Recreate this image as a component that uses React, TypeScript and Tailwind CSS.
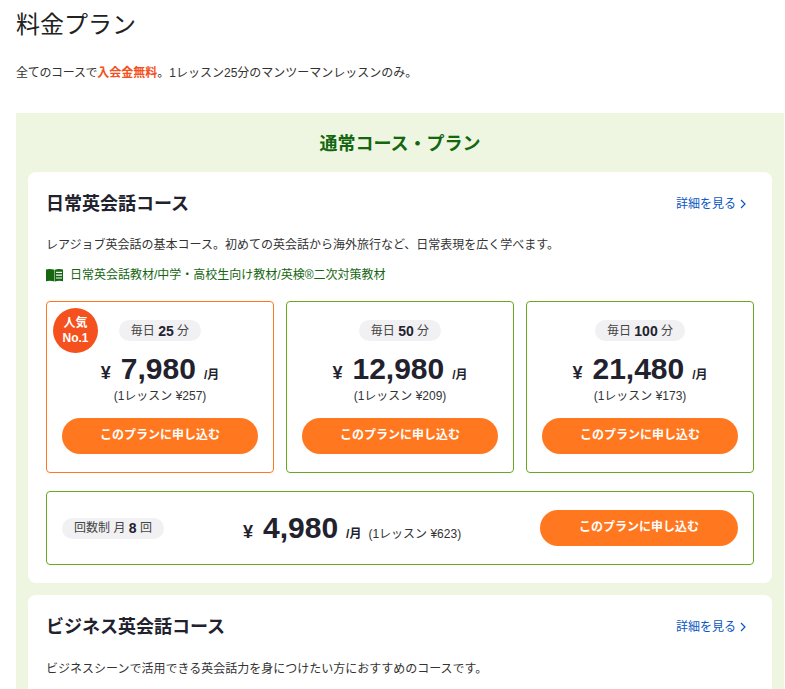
import React from 'react';

const plans = [
  { days: '25', price: '7,980', unit: '¥257', popular: true },
  { days: '50', price: '12,980', unit: '¥209', popular: false },
  { days: '100', price: '21,480', unit: '¥173', popular: false },
];

const ApplyButton: React.FC<{ wide?: boolean }> = ({ wide }) => (
  <button className={`h-9 rounded-full bg-[#ff7820] text-xs font-bold text-white pb-0.5 ${wide ? 'w-[198px]' : 'w-[196px]'}`}>
    このプランに申し込む
  </button>
);

const CourseHeader: React.FC<{ title: string }> = ({ title }) => (
  <div className="flex items-center justify-between h-[27px]">
    <h3 className="text-lg font-bold text-[#22222e]">{title}</h3>
    <a className="flex items-center gap-1 text-xs text-[#0a56c2] mr-2">
      詳細を見る
      <svg width="6" height="10" viewBox="0 0 6 10" fill="none" stroke="#0a56c2" strokeWidth="1.2" className="mt-px">
        <path d="M1 1l4 4-4 4" />
      </svg>
    </a>
  </div>
);

export default function App() {
  return (
    <div
      className="h-[689px] overflow-hidden bg-white pl-4 text-[#333]"
      style={{ fontFamily: '"Liberation Sans", "Noto Sans CJK JP", sans-serif' }}
    >
      <h1 className="pt-[7px] text-2xl leading-9 text-[#222]">料金プラン</h1>
      <p className="mt-[21px] text-xs leading-[18px]">
        <span className="tracking-[-0.3px]">全てのコースで</span>
        <strong className="text-[#f4511e]">入会金無料</strong>。1レッスン25分のマンツーマンレッスンのみ。
      </p>

      <section className="mt-[31px] w-[768px] bg-[#eef6e2] px-3">
        <h2 className="pt-[18px] h-[59px] text-center text-lg leading-[27px] font-bold text-[#14660f]">
          通常コース・プラン
        </h2>

        {/* 日常英会話 */}
        <div className="rounded-lg bg-white px-[18px] pt-[18px] pb-[18px]">
          <CourseHeader title="日常英会話コース" />
          <p className="mt-[19px] text-xs leading-[18px]">
            レアジョブ英会話の基本コース。初めての英会話から海外旅行など、日常表現を広く学べます。
          </p>
          <div className="mt-3 flex items-center gap-[7px] text-xs leading-[18px] text-[#14660f]">
            <svg width="17" height="14" viewBox="0 0 17 14" fill="#14660f">
              <path d="M0 1.500C2.500.8 5.500.8 8.500 1.800V13.500C5.500 12.500 2.500 12.500 0 13.200Z" />
              <path d="M9 1.800C11.200.8 14.500.8 17 1.500V13.200C14.500 12.500 11.200 12.500 9 13.500ZM10 3.800V5H16V3.800ZM10 6.600V7.800H16V6.600ZM10 9.400V10.600H16V9.400Z" fillRule="evenodd" />
            </svg>
            日常英会話教材/中学・高校生向け教材/英検®二次対策教材
          </div>

          <div className="mt-[17px] grid grid-cols-3 gap-3">
            {plans.map(p => (
              <div
                key={p.days}
                className={`relative flex h-[172px] flex-col items-center rounded border bg-white pt-[18px] ${p.popular ? 'border-[#ff7820]' : 'border-[#6aa820]'}`}
              >
                {p.popular && (
                  <div className="absolute left-[6px] top-[6px] flex h-[45px] w-[45px] flex-col items-center justify-center rounded-full bg-[#f4511e] text-xs leading-[15px] font-bold text-white">
                    <span>人気</span>
                    <span>No.1</span>
                  </div>
                )}
                <div className="flex h-[21px] items-center rounded-full bg-[#f1f1f3] px-3 text-xs text-[#444]">
                  毎日&nbsp;<b className="text-sm text-[#22222e]">{p.days}</b>&nbsp;分
                </div>
                <div className="mt-[10px] flex h-[36px] items-baseline font-bold text-[#22222e]">
                  <span className="text-lg">¥</span>
                  <span className="ml-[10px] text-[30px] leading-9">{p.price}</span>
                  <span className="ml-2 text-xs">/月</span>
                </div>
                <div className="text-xs leading-[18px] text-[#333]">(1レッスン {p.unit})</div>
                <div className="mt-[13px]">
                  <ApplyButton />
                </div>
              </div>
            ))}
          </div>

          <div className="mt-[18px] flex h-[74px] items-center rounded border border-[#6aa820] pl-[15px] pr-[15px]">
            <div className="flex h-[21px] w-[102px] items-center justify-center rounded-full bg-[#f1f1f3] text-xs text-[#444]">
              回数制 月&nbsp;<b className="text-sm text-[#22222e]">8</b>&nbsp;回
            </div>
            <div className="ml-[79px] flex flex-1 items-baseline font-bold text-[#22222e]">
              <span className="text-lg">¥</span>
              <span className="ml-[10px] text-[30px] leading-9">4,980</span>
              <span className="ml-2 text-xs">/月</span>
              <span className="ml-[7px] text-xs font-normal text-[#333]">(1レッスン ¥623)</span>
            </div>
            <ApplyButton wide />
          </div>
        </div>

        {/* ビジネス英会話 */}
        <div className="mt-3 rounded-lg bg-white px-[18px] pt-[18px] pb-[18px]">
          <CourseHeader title="ビジネス英会話コース" />
          <p className="mt-5 text-xs leading-[18px]">
            ビジネスシーンで活用できる英会話力を身につけたい方におすすめのコースです。
          </p>
        </div>
      </section>
    </div>
  );
}
